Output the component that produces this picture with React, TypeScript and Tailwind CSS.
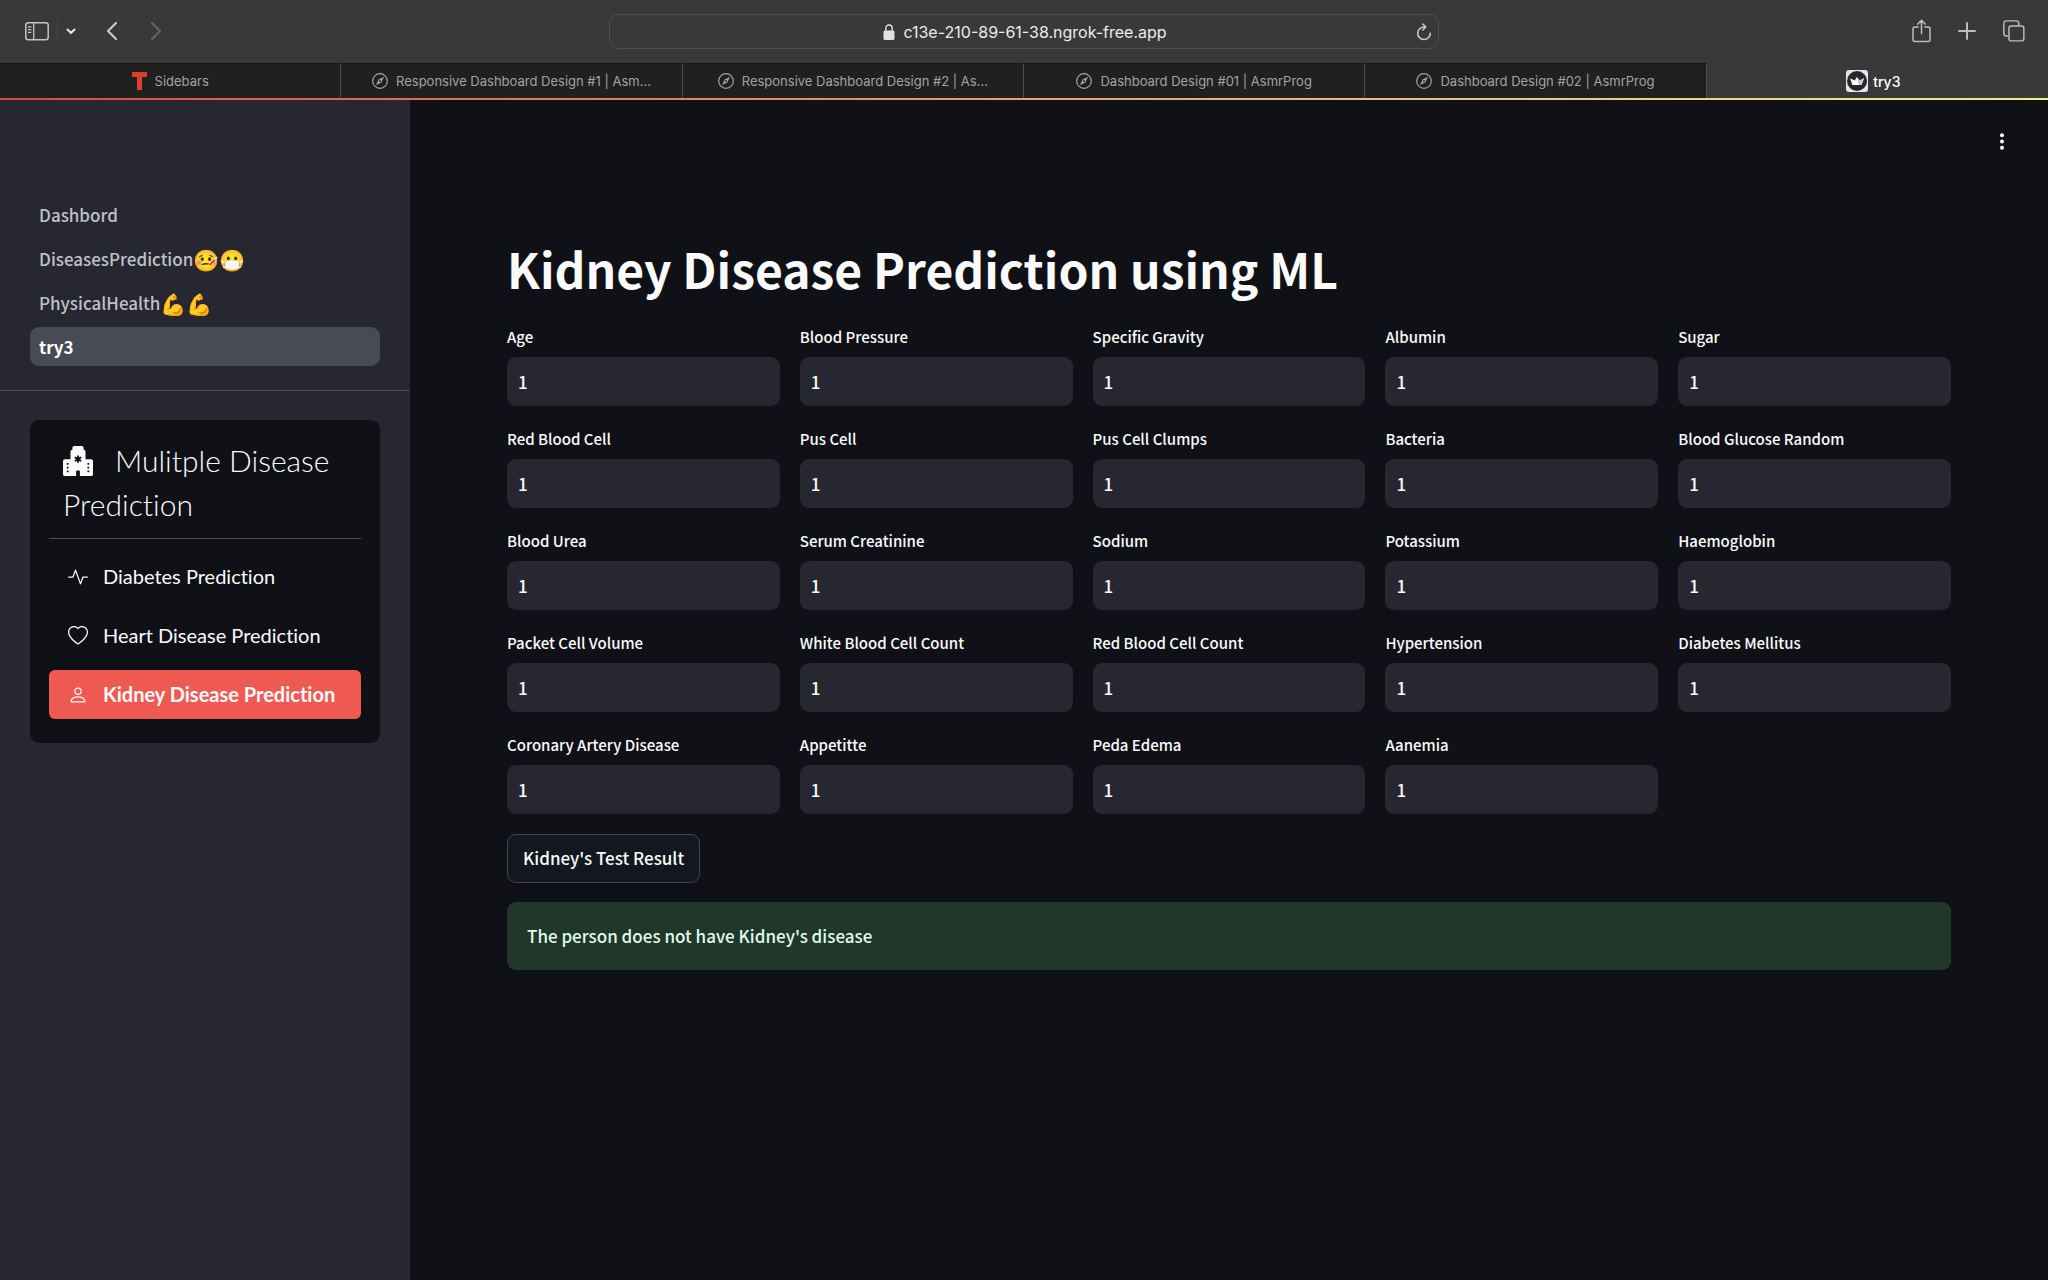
import { useState } from 'react'
import type { ReactNode } from 'react'

const FIELDS = [
  'Age', 'Blood Pressure', 'Specific Gravity', 'Albumin', 'Sugar',
  'Red Blood Cell', 'Pus Cell', 'Pus Cell Clumps', 'Bacteria', 'Blood Glucose Random',
  'Blood Urea', 'Serum Creatinine', 'Sodium', 'Potassium', 'Haemoglobin',
  'Packet Cell Volume', 'White Blood Cell Count', 'Red Blood Cell Count', 'Hypertension', 'Diabetes Mellitus',
  'Coronary Artery Disease', 'Appetitte', 'Peda Edema', 'Aanemia',
]

const PAGES = [
  { name: 'Dashbord', emoji: '' },
  { name: 'DiseasesPrediction', emoji: '🤒😷' },
  { name: 'PhysicalHealth', emoji: '💪💪' },
  { name: 'try3', emoji: '' },
]

const TABS = [
  { title: 'Sidebars', icon: <LetterIcon /> },
  { title: 'Responsive Dashboard Design #1 | Asm...', icon: <CompassIcon /> },
  { title: 'Responsive Dashboard Design #2 | As...', icon: <CompassIcon /> },
  { title: 'Dashboard Design #01 | AsmrProg', icon: <CompassIcon /> },
  { title: 'Dashboard Design #02 | AsmrProg', icon: <CompassIcon /> },
  { title: 'try3', icon: <CrownIcon /> },
]

/* ─── Icons ─── */
function LetterIcon() {
  return (
    <svg width="15" height="18" viewBox="0 0 15 18" fill="#d9402f">
      <rect width="15" height="5" />
      <rect x="5" width="5" height="18" />
    </svg>
  )
}

function CompassIcon() {
  return (
    <svg width="16" height="16" viewBox="0 0 16 16" fill="none" stroke="#a3a3a3">
      <circle cx="8" cy="8" r="7.3" strokeWidth="1.2" />
      <path d="M12 3.8 9.4 9.4 4 12 6.6 6.6Z" fill="#a3a3a3" stroke="none" />
      <circle cx="8" cy="8" r="0.9" fill="#202020" stroke="none" />
    </svg>
  )
}

function CrownIcon() {
  return (
    <svg width="22" height="22" viewBox="0 0 22 22">
      <rect width="22" height="22" rx="3" fill="#e6e6e8" />
      <circle cx="11" cy="11" r="10" fill="#262730" />
      <path d="M4 8.2 8.6 10.6 11 7 13.4 10.6 18 8.2 15.6 15H6.4Z" fill="#fff" />
      <path d="M11 7 13.4 10.6 18 8.2 15.6 15H13Z" fill="#c9c9ce" />
    </svg>
  )
}

function SidebarIcon() {
  return (
    <svg width="24" height="19" viewBox="0 0 24 19" fill="none" stroke="#c4c4c4" strokeWidth="1.5">
      <rect x="0.8" y="0.8" width="22.4" height="17" rx="2.5" />
      <path d="M8.7 1v17M3 4.8h3.4M3 7.6h3.4M3 10.4h3.4" strokeWidth="1.3" />
    </svg>
  )
}

function ChevronIcon({ d, w, h, color, stroke }: { d: string; w: number; h: number; color: string; stroke: number }) {
  return (
    <svg width={w} height={h} viewBox={`0 0 ${w} ${h}`} fill="none" stroke={color} strokeWidth={stroke} strokeLinecap="round" strokeLinejoin="round">
      <path d={d} />
    </svg>
  )
}

function LockIcon() {
  return (
    <svg width="12" height="16" viewBox="0 0 12 16">
      <rect x="0.5" y="6.5" width="11" height="9.5" rx="1.5" fill="#e2e2e2" />
      <path d="M2.8 7V4.2a3.2 3.2 0 0 1 6.4 0V7" fill="none" stroke="#e2e2e2" strokeWidth="1.4" />
    </svg>
  )
}

function ReloadIcon() {
  return (
    <svg width="16" height="18" viewBox="0 0 16 18" fill="none" stroke="#d0d0d0" strokeWidth="1.5" strokeLinecap="round" strokeLinejoin="round">
      <path d="M8.6 4A6.3 6.3 0 1 0 14.3 10.3" />
      <path d="M6.8 1 9.8 4 6.8 7" />
    </svg>
  )
}

function ShareIcon() {
  return (
    <svg width="19" height="24" viewBox="0 0 19 24" fill="none" stroke="#bdbdbd" strokeWidth="1.5" strokeLinecap="round" strokeLinejoin="round">
      <path d="M6.2 8H3A2 2 0 0 0 1 10v10.6a2 2 0 0 0 2 2h13a2 2 0 0 0 2-2V10a2 2 0 0 0-2-2h-3.2M9.5 14.5V1.4M5.8 5.1l3.7-3.8 3.7 3.8" />
    </svg>
  )
}

function TabsIcon() {
  return (
    <svg width="22" height="22" viewBox="0 0 23 23" fill="none" stroke="#bdbdbd" strokeWidth="1.5">
      <rect x="6.2" y="6.2" width="15.6" height="15.6" rx="2.5" />
      <path d="M6 16.8H3.5A2.6 2.6 0 0 1 .9 14.2V3.5A2.6 2.6 0 0 1 3.5.9h10.4a2.6 2.6 0 0 1 2.6 2.6V6" />
    </svg>
  )
}

function HospitalIcon() {
  return (
    <svg width="30" height="30" viewBox="0 0 16 16" fill="#fafafa" className="inline-block align-[-0.125em]">
      <path
        fillRule="evenodd"
        d="M6 0a1 1 0 0 0-1 1v1a1 1 0 0 0-1 1v4H1a1 1 0 0 0-1 1v7a1 1 0 0 0 1 1h6v-2.5a.5.5 0 0 1 .5-.5h1a.5.5 0 0 1 .5.5V16h6a1 1 0 0 0 1-1V8a1 1 0 0 0-1-1h-3V3a1 1 0 0 0-1-1V1a1 1 0 0 0-1-1zm2.5 5.034v1.1l.953-.55.5.867L9 7l.953.55-.5.866-.953-.55v1.1h-1v-1.1l-.953.55-.5-.866L7 7l-.953-.55.5-.866.953.55v-1.1zM2.25 9h.5a.25.25 0 0 1 .25.25v.5a.25.25 0 0 1-.25.25h-.5A.25.25 0 0 1 2 9.75v-.5A.25.25 0 0 1 2.25 9m0 2h.5a.25.25 0 0 1 .25.25v.5a.25.25 0 0 1-.25.25h-.5a.25.25 0 0 1-.25-.25v-.5a.25.25 0 0 1 .25-.25M2 13.25a.25.25 0 0 1 .25-.25h.5a.25.25 0 0 1 .25.25v.5a.25.25 0 0 1-.25.25h-.5a.25.25 0 0 1-.25-.25zM13.25 9h.5a.25.25 0 0 1 .25.25v.5a.25.25 0 0 1-.25.25h-.5a.25.25 0 0 1-.25-.25v-.5a.25.25 0 0 1 .25-.25M13 11.25a.25.25 0 0 1 .25-.25h.5a.25.25 0 0 1 .25.25v.5a.25.25 0 0 1-.25.25h-.5a.25.25 0 0 1-.25-.25zm.25 1.75h.5a.25.25 0 0 1 .25.25v.5a.25.25 0 0 1-.25.25h-.5a.25.25 0 0 1-.25-.25v-.5a.25.25 0 0 1 .25-.25"
      />
    </svg>
  )
}

const MENU = [
  {
    label: 'Diabetes Prediction',
    icon: 'M6 2a.5.5 0 0 1 .47.33L10 12.036l1.53-4.208A.5.5 0 0 1 12 7.5h3.5a.5.5 0 0 1 0 1h-3.15l-1.88 5.17a.5.5 0 0 1-.94 0L6 3.964 4.47 8.171A.5.5 0 0 1 4 8.5H.5a.5.5 0 0 1 0-1h3.15l1.88-5.17A.5.5 0 0 1 6 2',
  },
  {
    label: 'Heart Disease Prediction',
    icon: 'm8 2.748-.717-.737C5.6.281 2.514.878 1.4 3.053c-.523 1.023-.641 2.5.314 4.385.92 1.815 2.834 3.989 6.286 6.357 3.452-2.368 5.365-4.542 6.286-6.357.955-1.886.838-3.362.314-4.385C13.486.878 10.4.28 8.717 2.01zM8 15C-7.333 4.868 3.279-3.04 7.824 1.143q.09.083.176.171a3 3 0 0 1 .176-.17C12.72-3.042 23.333 4.867 8 15',
  },
  {
    label: 'Kidney Disease Prediction',
    icon: 'M8 8a3 3 0 1 0 0-6 3 3 0 0 0 0 6m2-3a2 2 0 1 1-4 0 2 2 0 0 1 4 0m4 8c0 1-1 1-1 1H3s-1 0-1-1 1-4 6-4 6 3 6 4m-1-.004c-.001-.246-.154-.986-.832-1.664C11.516 10.68 10.289 10 8 10s-3.516.68-4.168 1.332c-.678.678-.83 1.418-.832 1.664z',
  },
]

/* ─── Browser chrome ─── */
function ToolButton({ label, children, className = '' }: { label: string; children: ReactNode; className?: string }) {
  return (
    <button type="button" aria-label={label} className={`flex items-center justify-center ${className}`}>
      {children}
    </button>
  )
}

function Toolbar() {
  return (
    <div className="grid h-[63px] grid-cols-[1fr_830px_1fr] items-center bg-[#393939]">
      <div className="flex items-center pb-px pl-[25px]">
        <ToolButton label="Show sidebar"><SidebarIcon /></ToolButton>
        <span className="ml-2 h-6 w-px bg-[#464646]" />
        <ToolButton label="Tab groups" className="ml-2">
          <ChevronIcon d="M1.5 1.5 5 5l3.5-3.5" w={10} h={7} color="#e8e8e8" stroke={2} />
        </ToolButton>
        <ToolButton label="Back" className="ml-[30px]">
          <ChevronIcon d="M10 1 2 9l8 8" w={12} h={18} color="#d0d0d0" stroke={2} />
        </ToolButton>
        <ToolButton label="Forward" className="ml-8">
          <ChevronIcon d="M2 1l8 8-8 8" w={12} h={18} color="#646464" stroke={2} />
        </ToolButton>
      </div>
      <div className="flex h-[35px] items-center rounded-[9px] border border-[#4f4f4f] pr-[6px] pl-6">
        <div className="flex flex-1 items-center justify-center gap-2">
          <LockIcon />
          <span className="font-['Inter'] text-[16px] leading-5 text-[#ececec]">c13e-210-89-61-38.ngrok-free.app</span>
        </div>
        <ToolButton label="Reload"><ReloadIcon /></ToolButton>
      </div>
      <div className="flex items-center justify-end gap-[27px] pr-[23px] pb-[2px]">
        <ToolButton label="Share"><ShareIcon /></ToolButton>
        <ToolButton label="New tab">
          <ChevronIcon d="M9 1v16M1 9h16" w={18} h={18} color="#bdbdbd" stroke={2} />
        </ToolButton>
        <ToolButton label="Tab overview"><TabsIcon /></ToolButton>
      </div>
    </div>
  )
}

function TabBar({ active }: { active: number }) {
  return (
    <div className="grid h-[35px] grid-cols-6 font-['Inter'] text-[13px]">
      {TABS.map((tab, i) => (
        <button
          key={tab.title}
          type="button"
          className={`flex min-w-0 items-center justify-center ${
            i === active
              ? 'gap-[5px] bg-[#393939] pr-2 text-[14px] font-medium text-white'
              : 'gap-2 border-t border-r border-t-[#161616] border-r-[#4a4a4a] bg-[#202020] text-[#a3a3a3]'
          }`}
        >
          {tab.icon}
          <span className="pt-px whitespace-nowrap">{tab.title}</span>
        </button>
      ))}
    </div>
  )
}

/* ─── Sidebar ─── */
function Sidebar() {
  const [selected, setSelected] = useState(2)

  return (
    <aside className="w-[410px] shrink-0 bg-[#262730]">
      <nav className="flex flex-col gap-[5px] px-[30px] pt-[95px] pb-6">
        {PAGES.map((page) => (
          <a
            key={page.name}
            href="#"
            className={`flex h-[39px] items-center rounded-[9px] px-[9px] text-[17px] leading-6 ${
              page.name === 'try3' ? 'bg-[#494b54] font-bold text-white' : 'font-medium text-[#c0c1c8]'
            }`}
          >
            {page.name}
            {page.emoji && <span className="text-[21px]">{page.emoji}</span>}
          </a>
        ))}
      </nav>
      <hr className="border-[#4b4c54]" />
      <div className="mx-[30px] mt-[29px] rounded-[9px] bg-[#0f1116] px-[19px] pt-[18px] pb-6 font-['Lato'] text-[#fafafa] [font-variant-ligatures:none]">
        <h2 className="px-[14px] text-[30px] leading-[44px] font-light">
          <HospitalIcon />
          <span className="ml-[22px]">Mulitple Disease Prediction</span>
        </h2>
        <hr className="mt-3 border-[#4c4d52]" />
        <ul className="mt-[13px] flex flex-col gap-[10px]">
          {MENU.map((item, i) => (
            <li key={item.label}>
              <button
                type="button"
                onClick={() => setSelected(i)}
                className={`flex h-[49px] w-full items-center gap-[15px] rounded-md pl-[19px] text-[20px] leading-6 whitespace-nowrap ${
                  i === selected ? 'bg-[#ee5a52] font-bold' : 'font-normal'
                }`}
              >
                <svg width="20" height="20" viewBox="0 0 16 16" fill="currentColor"><path d={item.icon} /></svg>
                <span className="pb-[2px]">{item.label}</span>
              </button>
            </li>
          ))}
        </ul>
      </div>
    </aside>
  )
}

/* ─── Form ─── */
function Field({ label }: { label: string }) {
  const id = label.toLowerCase().replace(/\s+/g, '-')
  return (
    <div>
      <label htmlFor={id} className="block h-8 text-[15px] leading-6 font-medium">{label}</label>
      <input
        id={id}
        type="text"
        defaultValue="1"
        className="block h-[49px] w-full rounded-[9px] bg-[#262730] px-[11px] text-[17px] leading-6 font-medium outline-none"
      />
    </div>
  )
}

export default function App() {
  const [tested, setTested] = useState(true)

  return (
    <div className="flex min-h-screen flex-col bg-[#0f1116] font-['Noto_Sans_CJK_SC',sans-serif] text-[#fafafa]">
      <header>
        <Toolbar />
        <TabBar active={5} />
        <div className="h-[2px] bg-linear-to-r from-[#d8493a] via-[#e8a070] to-[#eef08c]" />
      </header>
      <div className="flex flex-1">
        <Sidebar />
        <div className="flex-1">
          <div className="flex justify-end pt-[30px] pr-9">
            <button type="button" aria-label="Main menu" className="flex h-[22px] w-5 items-center justify-center">
              <svg width="4" height="17" viewBox="0 0 4 17" fill="#fafafa">
                <circle cx="2" cy="2.3" r="2" />
                <circle cx="2" cy="8.5" r="2" />
                <circle cx="2" cy="14.7" r="2" />
              </svg>
            </button>
          </div>
          <main className="px-[97px] pt-[83px]">
            <h1 className="text-[48px] leading-[66px] font-bold">Kidney Disease Prediction using ML</h1>
            <form onSubmit={(e) => e.preventDefault()}>
              <div className="mt-6 grid grid-cols-5 gap-x-5 gap-y-[21px]">
                {FIELDS.map((label) => <Field key={label} label={label} />)}
              </div>
              <button
                type="button"
                onClick={() => setTested(true)}
                className="mt-5 h-[49px] rounded-[9px] border border-[#44464d] bg-[#131720] px-[15px] pb-[2px] text-[17px] leading-6 font-medium"
              >
                Kidney&apos;s Test Result
              </button>
            </form>
            {tested && (
              <div role="alert" className="mt-[19px] flex h-[68px] items-center rounded-[9px] bg-[#22372b] px-5 text-[17px] leading-6 font-medium text-[#dffde9]">
                The person does not have Kidney&apos;s disease
              </div>
            )}
          </main>
        </div>
      </div>
    </div>
  )
}
